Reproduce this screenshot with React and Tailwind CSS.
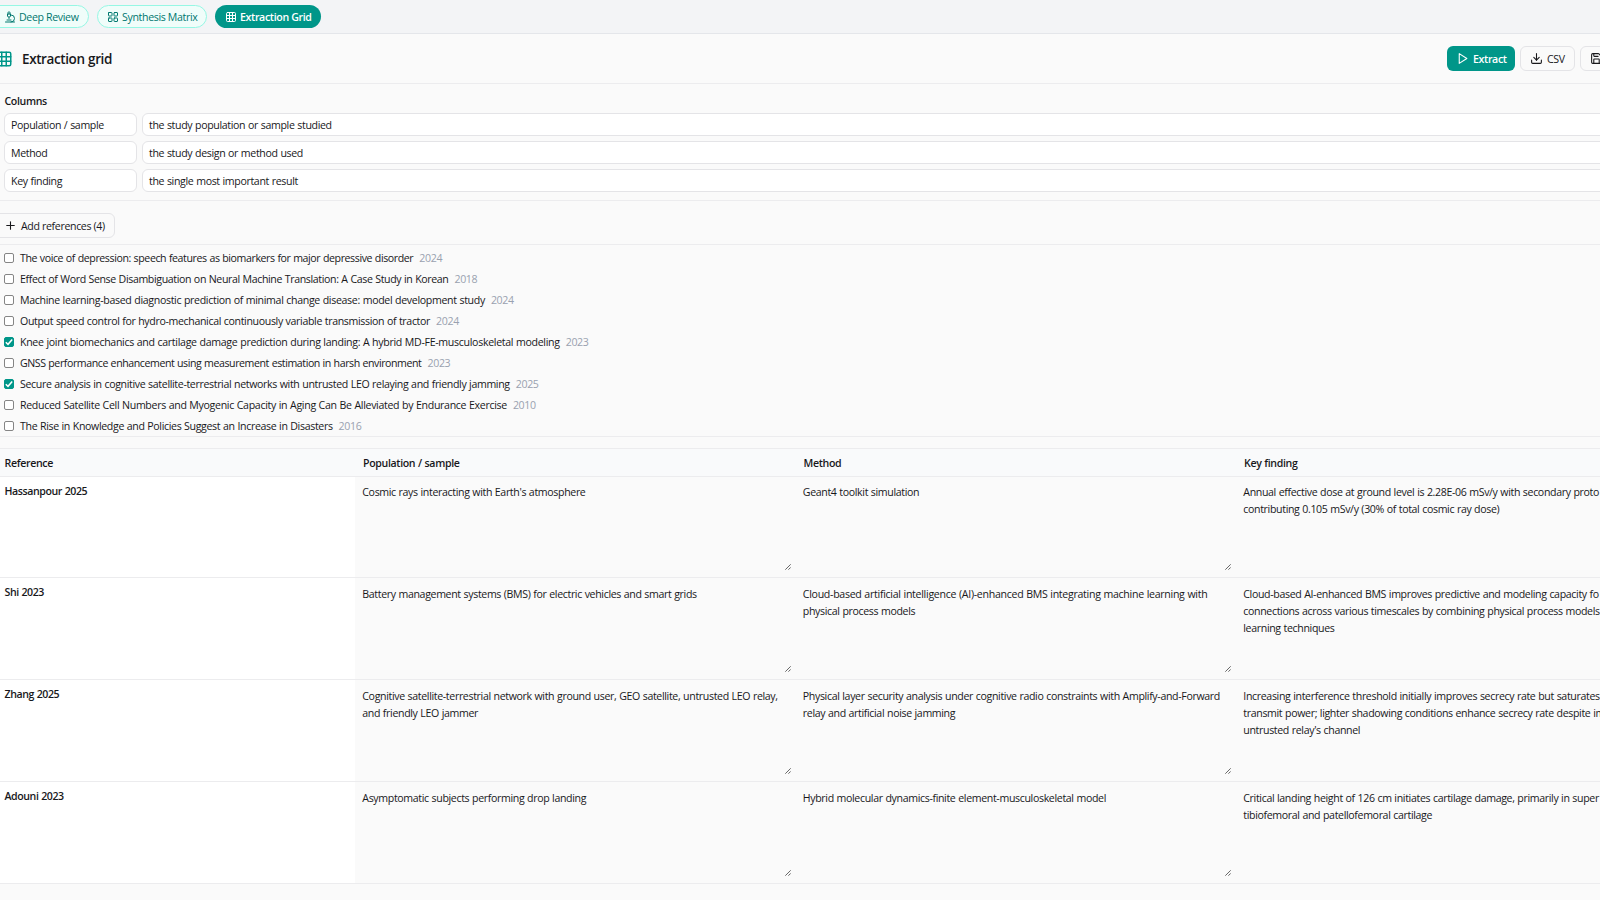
import { useState } from 'react'
import { Microscope, LayoutGrid, Grid3x3, Download, Save, Plus } from 'lucide-react'

const COLUMNS = [
  ['Population / sample', 'the study population or sample studied'],
  ['Method', 'the study design or method used'],
  ['Key finding', 'the single most important result'],
]

const REFERENCES = [
  { title: 'The voice of depression: speech features as biomarkers for major depressive disorder', year: 2024, track: 'tracking-[-0.4px]' },
  { title: 'Effect of Word Sense Disambiguation on Neural Machine Translation: A Case Study in Korean', year: 2018, track: 'tracking-[-0.37px]' },
  { title: 'Machine learning-based diagnostic prediction of minimal change disease: model development study', year: 2024, track: 'tracking-[-0.33px]' },
  { title: 'Output speed control for hydro-mechanical continuously variable transmission of tractor', year: 2024 },
  { title: 'Knee joint biomechanics and cartilage damage prediction during landing: A hybrid MD-FE-musculoskeletal modeling', year: 2023, track: 'tracking-[-0.31px]' },
  { title: 'GNSS performance enhancement using measurement estimation in harsh environment', year: 2023, track: 'tracking-[-0.42px]' },
  { title: 'Secure analysis in cognitive satellite-terrestrial networks with untrusted LEO relaying and friendly jamming', year: 2025 },
  { title: 'Reduced Satellite Cell Numbers and Myogenic Capacity in Aging Can Be Alleviated by Endurance Exercise', year: 2010, track: 'tracking-[-0.32px]' },
  { title: 'The Rise in Knowledge and Policies Suggest an Increase in Disasters', year: 2016 },
]

const ROWS = [
  {
    ref: 'Hassanpour 2025',
    cells: [
      ["Cosmic rays interacting with Earth's atmosphere"],
      ['Geant4 toolkit simulation'],
      ['Annual effective dose at ground level is 2.28E-06 mSv/y with secondary proto', 'contributing 0.105 mSv/y (30% of total cosmic ray dose)'],
    ],
  },
  {
    ref: 'Shi 2023',
    cells: [
      ['Battery management systems (BMS) for electric vehicles and smart grids'],
      ['Cloud-based artificial intelligence (AI)-enhanced BMS integrating machine learning with', 'physical process models'],
      ['Cloud-based AI-enhanced BMS improves predictive and modeling capacity fo', 'connections across various timescales by combining physical process models', 'learning techniques'],
    ],
  },
  {
    ref: 'Zhang 2025',
    cells: [
      ['Cognitive satellite-terrestrial network with ground user, GEO satellite, untrusted LEO relay,', 'and friendly LEO jammer'],
      ['Physical layer security analysis under cognitive radio constraints with Amplify-and-Forward', 'relay and artificial noise jamming'],
      ['Increasing interference threshold initially improves secrecy rate but saturates', 'transmit power; lighter shadowing conditions enhance secrecy rate despite im', "untrusted relay's channel"],
    ],
  },
  {
    ref: 'Adouni 2023',
    cells: [
      ['Asymptomatic subjects performing drop landing'],
      ['Hybrid molecular dynamics-finite element-musculoskeletal model'],
      ['Critical landing height of 126 cm initiates cartilage damage, primarily in super', 'tibiofemoral and patellofemoral cartilage'],
    ],
  },
]

function PlayIcon() {
  return (
    <svg viewBox="0 0 24 24" className="w-[13px] h-[13px] shrink-0" fill="none" stroke="currentColor" strokeWidth="2" strokeLinecap="round" strokeLinejoin="round">
      <path d="M6 3 L20 12 L6 21 Z" />
    </svg>
  )
}

function Checkbox({ checked, onClick }) {
  return (
    <button
      onClick={onClick}
      className={`w-[10px] h-[10px] shrink-0 rounded-[2px] border -mt-px ${
        checked ? 'bg-[#009689] border-[#009689]' : 'bg-white border-[#858585]'
      }`}
    >
      {checked && (
        <svg viewBox="0 0 8 8" className="w-2 h-2 block" fill="none" stroke="white" strokeWidth="1.5">
          <path d="M0.8 4.2 L3 6.3 L7.2 1.4" />
        </svg>
      )}
    </button>
  )
}

function Cell({ lines }) {
  return (
    <div className="relative pl-[7.3px] pt-[7.4px] leading-[17.1px] whitespace-nowrap">
      {lines.map(l => (
        <p key={l} className={l.startsWith('Cloud-based art') ? 'tracking-[-0.29px]' : ''}>{l}</p>
      ))}
      <svg viewBox="0 0 6 6" className="absolute right-[5px] bottom-[7px] w-[6px] h-[6px]" fill="none" stroke="#555" strokeWidth="0.9">
        <path d="M0.3 5.7 L5.7 0.3 M3.4 5.7 L5.7 3.4" />
      </svg>
    </div>
  )
}

export default function App() {
  const [picked, setPicked] = useState([4, 6])

  function toggle(i) {
    setPicked(picked.includes(i) ? picked.filter(p => p !== i) : [...picked, i])
  }

  return (
    <div className="w-[1600px] h-[900px] overflow-hidden bg-[#fafafa] text-[#18181b] font-['Open_Sans','Noto_Sans',sans-serif] text-[10.6px] tracking-[-0.35px] [word-spacing:0.35px] leading-4 whitespace-nowrap">
      <div className="h-[34px] bg-[#f3f4f6] border-b border-[#e4e6ea] flex items-start pt-[5px]">
        <button className="-ml-3 w-[101px] h-[23px] pl-[15px] rounded-full border border-[#96f7e4] bg-[#f0fdfa] text-[#00786f] flex items-center gap-[3px]">
          <Microscope size={12} /><span>Deep Review</span>
        </button>
        <button className="ml-2 w-[110px] h-[23px] pl-[8.5px] rounded-full border border-[#96f7e4] bg-[#f0fdfa] text-[#00786f] flex items-center gap-[3.5px]">
          <LayoutGrid size={12} /><span>Synthesis Matrix</span>
        </button>
        <button className="ml-2 w-[106px] h-[23px] pl-[9.5px] rounded-full bg-[#009689] text-white font-semibold flex items-center gap-[3.5px]">
          <Grid3x3 size={12} /><span>Extraction Grid</span>
        </button>
      </div>

      <div className="h-[50px] border-b border-[#ececee] flex items-center w-[1640px]">
        <Grid3x3 size={18} className="text-[#009689] -ml-[5px]" />
        <h1 className="ml-[9px] text-[13.5px] tracking-[-0.4px] font-semibold">Extraction grid</h1>
        <div className="ml-auto flex gap-[5px] mr-[20px]">
          <button className="w-[68px] h-[25px] pl-[9px] rounded-md bg-[#009689] text-white font-semibold flex items-center gap-[4px]">
            <PlayIcon /><span>Extract</span>
          </button>
          <button className="w-[55px] h-[25px] pl-[9px] rounded-md border border-[#e4e4e7] flex items-center gap-[4px]">
            <Download size={13} /><span>CSV</span>
          </button>
          <button className="w-[40px] h-[25px] pl-[9px] rounded-md border border-[#e4e4e7] flex items-center">
            <Save size={13} />
          </button>
        </div>
      </div>

      <div className="h-[117px] pt-[9px] pl-1 border-b border-[#ececee]">
        <p className="font-semibold h-[20px] pl-[0.5px]">Columns</p>
        <div className="flex flex-col gap-[5px] w-[1640px]">
          {COLUMNS.map(([name, hint]) => (
            <div key={name} className="flex gap-[5px]">
              <div className="w-[133px] h-[23px] px-[6px] flex items-center bg-white border border-[#e4e4e7] rounded-md">{name}</div>
              <div className="flex-1 h-[23px] px-[6px] flex items-center bg-white border border-[#e4e4e7] rounded-md">{hint}</div>
            </div>
          ))}
        </div>
      </div>

      <div className="h-[44px] pt-3 border-b border-[#ececee]">
        <button className="-ml-2 w-[123px] h-[25px] pl-[11px] rounded-md border border-[#e4e4e7] flex items-center gap-[4px]">
          <Plus size={13} /><span>Add references (4)</span>
        </button>
      </div>

      <div className="h-[192px] pt-[2.5px] border-b border-[#ececee]">
        {REFERENCES.map((r, i) => (
          <label key={r.title} className="h-[21px] pl-1 flex items-center gap-[6px]">
            <Checkbox checked={picked.includes(i)} onClick={() => toggle(i)} />
            <span className={r.track}>{r.title}</span>
            <span className="text-[#99a1af]">{r.year}</span>
          </label>
        ))}
      </div>

      <div className="mt-[11px] w-[1676px] border-t border-[#ececee]">
        <div className="grid grid-cols-[355px_440.5px_440.5px_440px] h-[27.6px] pt-px items-center font-semibold bg-[#f9fafb] border-b border-[#ececee]">
          <span className="pl-[4.5px]">Reference</span>
          {COLUMNS.map(([name]) => <span key={name} className="pl-[8px]">{name}</span>)}
        </div>
        {ROWS.map(row => (
          <div key={row.ref} className="grid grid-cols-[355px_440.5px_440.5px_440px] h-[101.9px] border-b border-[#ececee]">
            <div className="bg-white pl-[4.5px] pt-[6px] font-semibold tracking-[-0.42px]">{row.ref}</div>
            {row.cells.map(lines => <Cell key={lines[0]} lines={lines} />)}
          </div>
        ))}
      </div>
    </div>
  )
}
